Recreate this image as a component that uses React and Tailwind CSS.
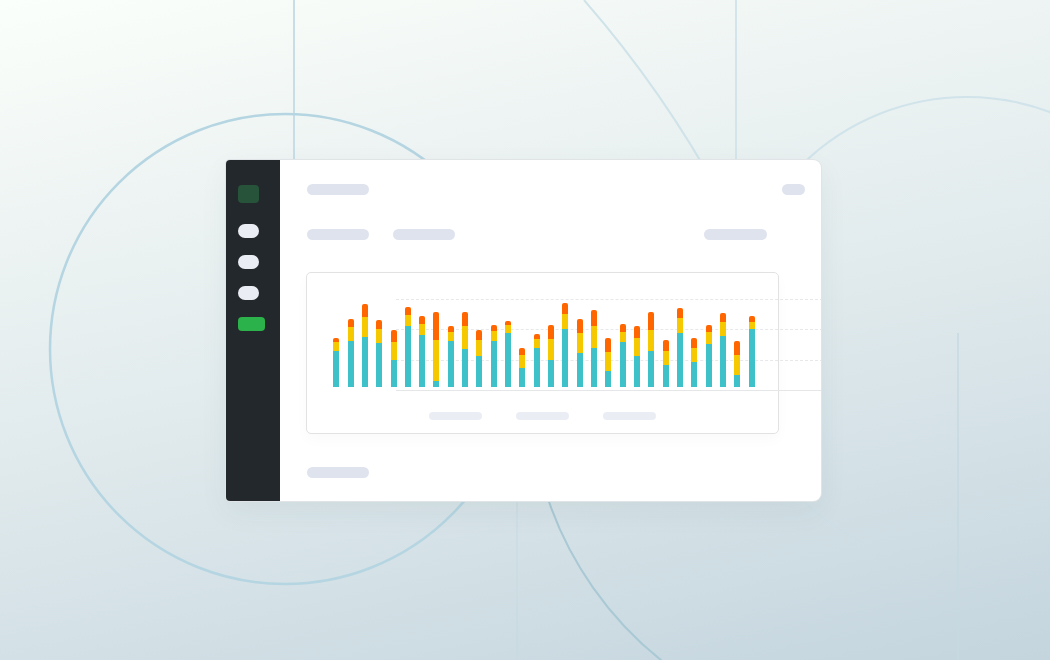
import React from "react";

const BARS = [
  [338, 342.3, 351],
  [319.3, 327.7, 341.7],
  [304, 317.3, 337],
  [320.3, 329.7, 343.7],
  [330.3, 342.3, 360.7],
  [307.3, 315, 326.7],
  [316.3, 324, 335.7],
  [312.7, 340.3, 381],
  [326.3, 332.7, 341.7],
  [312.7, 326.7, 349.3],
  [330.3, 340.3, 356.3],
  [325, 331, 341.7],
  [321, 325.7, 333.3],
  [348, 355.7, 368.7],
  [334, 339.3, 348],
  [325.7, 339.7, 360],
  [303.3, 314, 329.7],
  [319.3, 333.3, 353.3],
  [310.3, 326, 348],
  [338.7, 352.7, 371.7],
  [324, 332, 342],
  [326.7, 338, 356.3],
  [312.7, 330, 351],
  [340.3, 351, 365],
  [308, 318, 333.3],
  [338.7, 348, 362.7],
  [325, 332.7, 344],
  [313.3, 322.7, 336],
  [341, 355, 375],
  [316.3, 322, 329.7],
];

const BASE = 387;

function Background() {
  return (
    <svg
      className="absolute inset-0 pointer-events-none"
      width="1050"
      height="660"
      viewBox="0 0 1050 660"
      fill="none"
    >
      <defs>
        <linearGradient id="rc" gradientUnits="userSpaceOnUse" x1="0" y1="97" x2="0" y2="567">
          <stop offset="0" stopColor="#cfe3ea" stopOpacity="0.95" />
          <stop offset="0.75" stopColor="#c3dbe4" stopOpacity="0.55" />
          <stop offset="0.97" stopColor="#c3dbe4" stopOpacity="0" />
        </linearGradient>
      </defs>
      <line x1="294" y1="0" x2="294" y2="170" stroke="#c8dee6" strokeWidth="2" />
      <line x1="736" y1="0" x2="736" y2="170" stroke="#d3e5ea" strokeWidth="2" />
      <circle cx="285" cy="349" r="235" stroke="#b4d5e1" strokeWidth="2.5" />
      <circle cx="967" cy="332" r="235" stroke="url(#rc)" strokeWidth="2" />
      <path d="M584 0 A1095 1095 0 0 1 812 420" stroke="#cfe3e9" strokeWidth="2" />
      <path d="M535 448 A350 350 0 0 0 705 690" stroke="#a9c9d5" strokeWidth="2" />
      <line x1="958" y1="333" x2="958" y2="660" stroke="#c6d9e0" strokeWidth="1.5" />
      <line x1="517" y1="500" x2="517" y2="660" stroke="#c5d8df" strokeOpacity="0.6" strokeWidth="1.5" />
    </svg>
  );
}

function Pill({ className }) {
  return <div className={"rounded-full bg-[#dfe3ee] " + className} />;
}

function Chart() {
  return (
    <div className="mt-[32px] ml-[-1px] w-[473px] h-[162px] rounded-[5px] border-[1.5px] border-[#e2e2e2] bg-white shadow-[0_6px_14px_rgba(0,0,0,0.025)] flex flex-col">
      <div className="relative mt-[16.5px] ml-[26.2px] h-[97px]">
        <div className="absolute left-[63px] top-[9px] w-[427px] border-t border-dashed border-[#e6e8ea]" />
        <div className="absolute left-[63px] top-[39px] w-[427px] border-t border-dashed border-[#e6e8ea]" />
        <div className="absolute left-[63px] top-[70px] w-[427px] border-t border-dashed border-[#e6e8ea]" />
        <div className="absolute left-[63px] top-[100px] w-[430px] border-t border-[#e4e6e8]" />
        <div className="relative flex items-end gap-[8.33px] h-[97px]">
          {BARS.map(([top, oy, yt], i) => (
            <div key={i} className="w-[6px] flex flex-col rounded-t-[2px] overflow-hidden">
              <div className="bg-[#ff6600]" style={{ height: `${oy - top}px` }} />
              <div className="bg-[#f6c800]" style={{ height: `${yt - oy}px` }} />
              <div className="bg-[#3ec1c9]" style={{ height: `${BASE - yt}px` }} />
            </div>
          ))}
        </div>
      </div>
      <div className="mt-[25px] flex justify-center gap-[34px]">
        <div className="w-[53px] h-[8px] rounded-full bg-[#eaedf4]" />
        <div className="w-[53px] h-[8px] rounded-full bg-[#eaedf4]" />
        <div className="w-[53px] h-[8px] rounded-full bg-[#eaedf4]" />
      </div>
    </div>
  );
}

export default function App() {
  return (
    <div className="relative w-[1050px] h-[660px] overflow-hidden bg-[linear-gradient(168deg,#fbfffb_0%,#eef4f3_25%,#dfe9ec_55%,#c4d5de_100%)]">
      <Background />
      <div className="relative pl-[226px] pt-[160px]">
        <div className="flex w-[595px] h-[341px] rounded-l-[4px] rounded-r-[8px] overflow-hidden bg-white shadow-[0_0_0_1px_#e1e4e6,0_10px_30px_rgba(40,60,70,0.06)]">
          <div className="w-[54px] bg-[#23282c] flex flex-col items-start pl-[12px] pt-[25px]">
            <div className="w-[21px] h-[18px] rounded-[4px] bg-[#27533a]" />
            <div className="mt-[21px] w-[21px] h-[14px] rounded-full bg-[#eaedf3]" />
            <div className="mt-[17px] w-[21px] h-[14px] rounded-full bg-[#eaedf3]" />
            <div className="mt-[17px] w-[21px] h-[14px] rounded-full bg-[#eaedf3]" />
            <div className="mt-[17px] w-[27px] h-[14px] rounded-[4px] bg-[#2cb24a]" />
          </div>
          <div className="flex-1 flex flex-col pl-[27px] pr-[16px] pt-[24px]">
            <div className="flex justify-between items-center">
              <Pill className="w-[62px] h-[11px]" />
              <Pill className="w-[23px] h-[11px]" />
            </div>
            <div className="mt-[34px] flex items-center pr-[38px]">
              <Pill className="w-[62px] h-[11px]" />
              <Pill className="ml-[24px] w-[62px] h-[11px]" />
              <div className="flex-1" />
              <Pill className="w-[63px] h-[11px]" />
            </div>
            <Chart />
            <Pill className="mt-[33px] w-[62px] h-[11px]" />
          </div>
        </div>
      </div>
    </div>
  );
}
